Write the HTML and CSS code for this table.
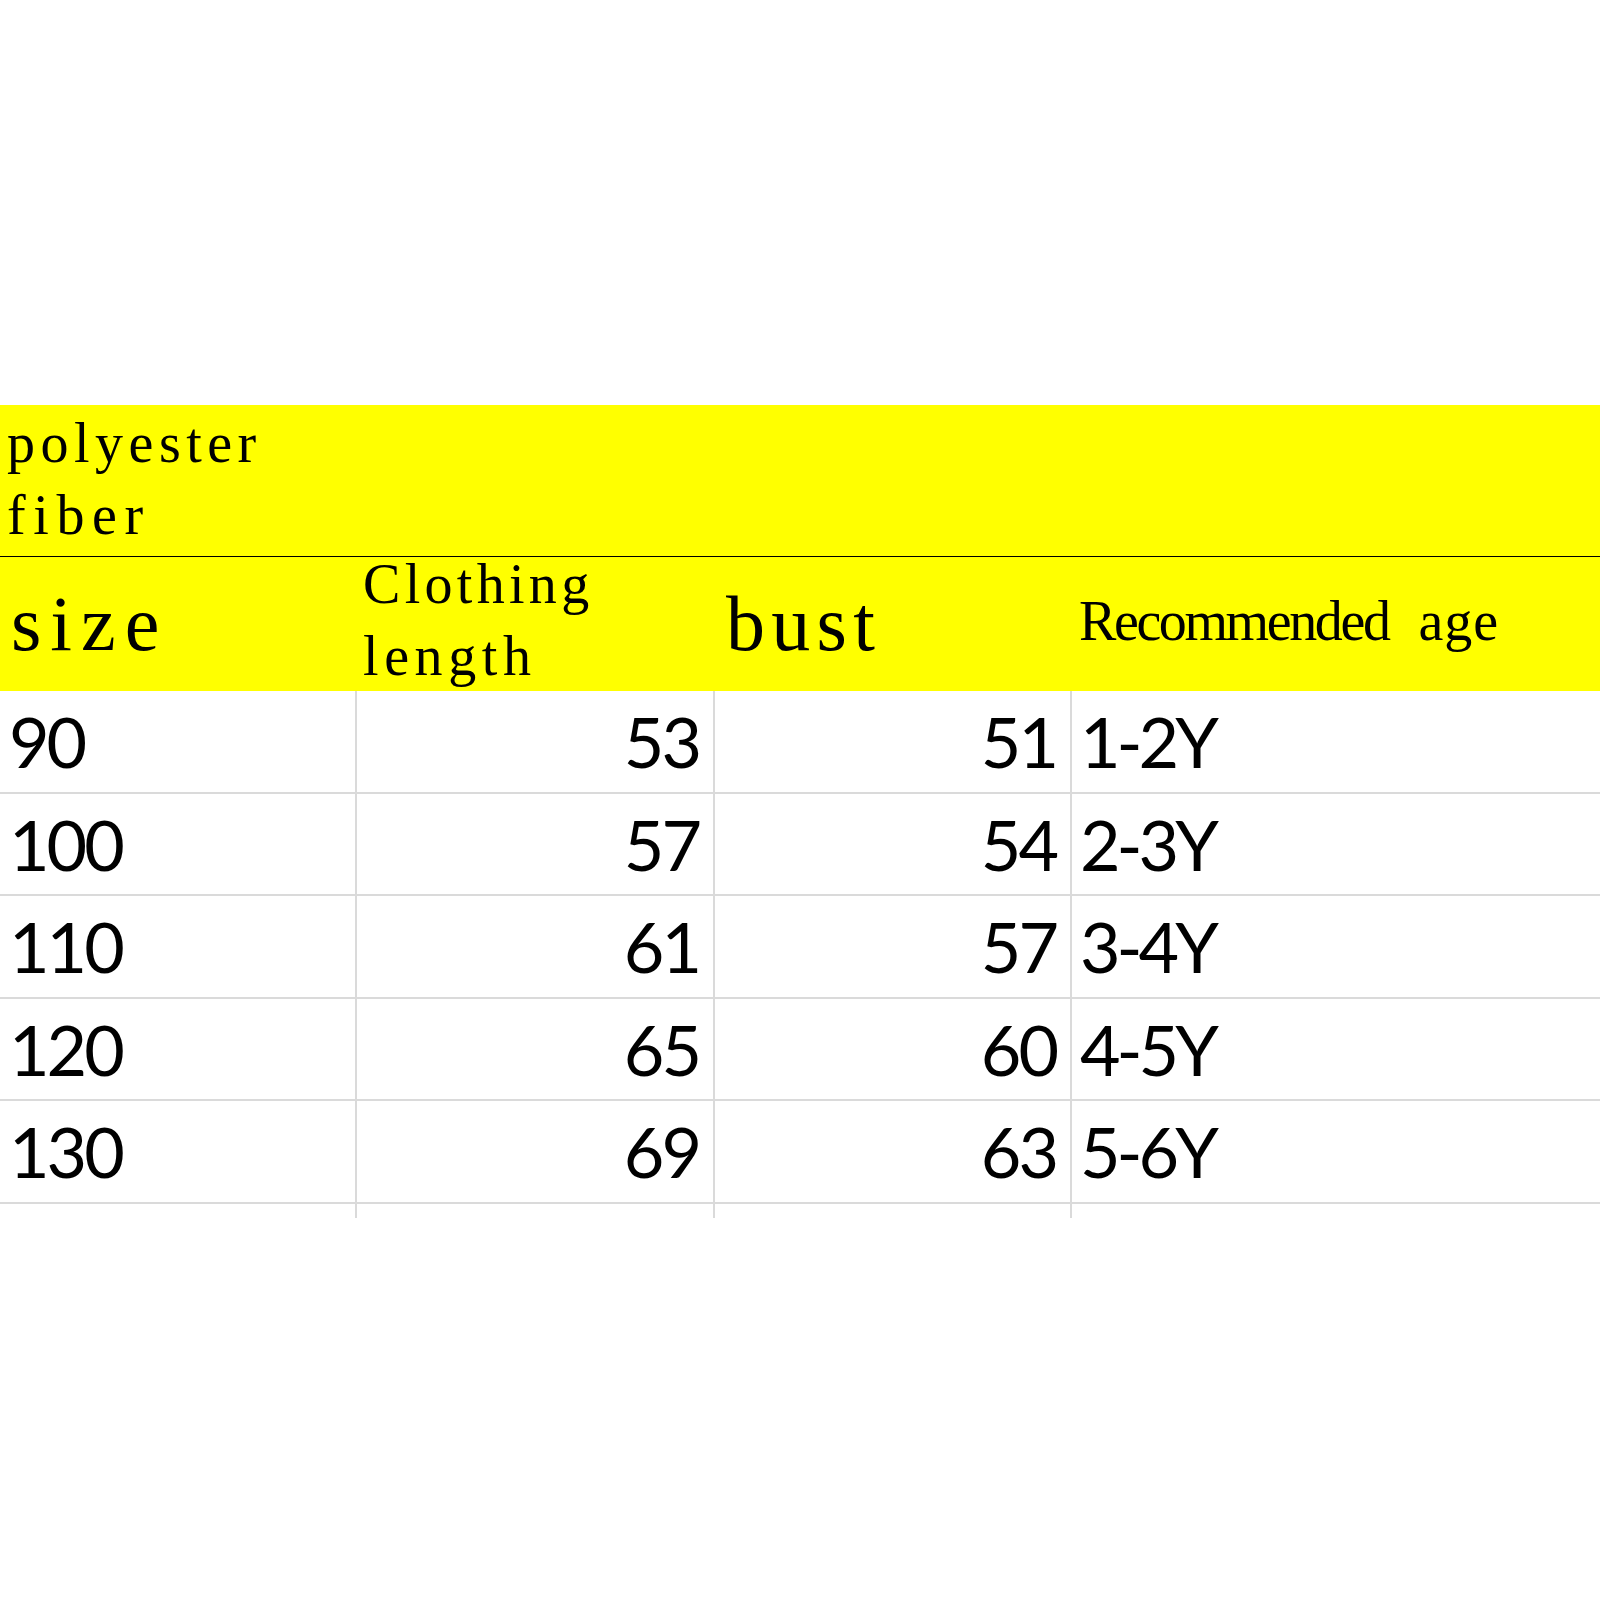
FILE: index.html
```html
<!DOCTYPE html>
<html lang="en">
<head>
<meta charset="utf-8">
<title>Size chart</title>
<link rel="stylesheet" href="styles.css">
</head>
<body>
<div class="sheet">
  <div class="title">
    <span class="line w-polyester">polyester</span>
    <span class="line w-fiber">fiber</span>
  </div>
  <div class="grid head">
    <div class="hcell c1"><span class="big w-size">size</span></div>
    <div class="hcell c2"><span class="two"><span class="line w-clothing">Clothing</span><span class="line w-length">length</span></span></div>
    <div class="hcell c3"><span class="big w-bust">bust</span></div>
    <div class="hcell c4"><span class="small"><span class="w-rec1">Recommended</span> <span class="w-rec2">age</span></span></div>
  </div>
  <div class="grid body">
    <div class="cell left">90</div><div class="cell right">53</div><div class="cell right">51</div><div class="cell left age">1-2Y</div>
    <div class="cell left">100</div><div class="cell right">57</div><div class="cell right">54</div><div class="cell left age">2-3Y</div>
    <div class="cell left">110</div><div class="cell right">61</div><div class="cell right">57</div><div class="cell left age">3-4Y</div>
    <div class="cell left">120</div><div class="cell right">65</div><div class="cell right">60</div><div class="cell left age">4-5Y</div>
    <div class="cell left">130</div><div class="cell right">69</div><div class="cell right">63</div><div class="cell left age">5-6Y</div>
    <div class="stub"></div><div class="stub"></div><div class="stub"></div><div class="stub"></div>
  </div>
</div>
</body>
</html>
```

FILE: styles.css
```css
html, body {
  margin: 0;
  padding: 0;
  background: #ffffff;
}

.sheet {
  padding-top: 405px;
  width: 1600px;
  color: #000000;
}

.title {
  box-sizing: border-box;
  height: 152px;
  background: #ffff00;
  border-bottom: 1px solid #000000;
  padding: 2px 0 0 7px;
  font-family: "Liberation Serif", "Times New Roman", serif;
  font-size: 56px;
  line-height: 72px;
}

.line {
  display: block;
  white-space: nowrap;
}

.w-polyester { letter-spacing: 5.5px; }
.w-fiber { letter-spacing: 7.6px; }

.grid {
  display: grid;
  grid-template-columns: 355px 358px 357px 1fr;
}

.head {
  height: 134px;
  grid-template-rows: 134px;
  background: #ffff00;
  font-family: "Liberation Serif", "Times New Roman", serif;
}

.hcell {
  box-sizing: border-box;
  height: 134px;
  display: flex;
  align-items: center;
  min-width: 0;
  white-space: nowrap;
}

.hcell.c1 { padding-left: 11px; }
.hcell.c2 { padding-left: 8px; padding-bottom: 8px; }
.hcell.c3 { padding-left: 13px; }
.hcell.c4 { padding-left: 9px; padding-bottom: 6px; }

.big {
  font-size: 78px;
  line-height: 86px;
}

.w-size { letter-spacing: 9px; }
.w-bust { letter-spacing: 6.3px; }

.two {
  font-size: 56px;
  line-height: 72px;
}

.w-clothing { letter-spacing: 4.3px; }
.w-length { letter-spacing: 5.6px; }

.small {
  font-size: 56px;
  line-height: 62px;
  word-spacing: 16px;
}

.w-rec1 { letter-spacing: -2.4px; }
.w-rec2 { letter-spacing: 1px; }

.body {
  grid-auto-rows: 102.5px;
  font-family: Lato, "Open Sans", sans-serif;
  font-size: 70px;
  line-height: 86px;
  letter-spacing: -3px;
}

.cell {
  box-sizing: border-box;
  display: flex;
  align-items: center;
  border-bottom: 2px solid #dadada;
  white-space: nowrap;
}

.cell:not(:nth-child(4n+1)),
.stub:not(:nth-child(4n+1)) {
  border-left: 2px solid #dadada;
}

.cell.left { justify-content: flex-start; padding-left: 9px; }
.cell.age { padding-left: 8px; letter-spacing: -4px; }
.cell.right { justify-content: flex-end; padding-right: 14px; }

.body .stub {
  box-sizing: border-box;
  height: 14px;
}
```
